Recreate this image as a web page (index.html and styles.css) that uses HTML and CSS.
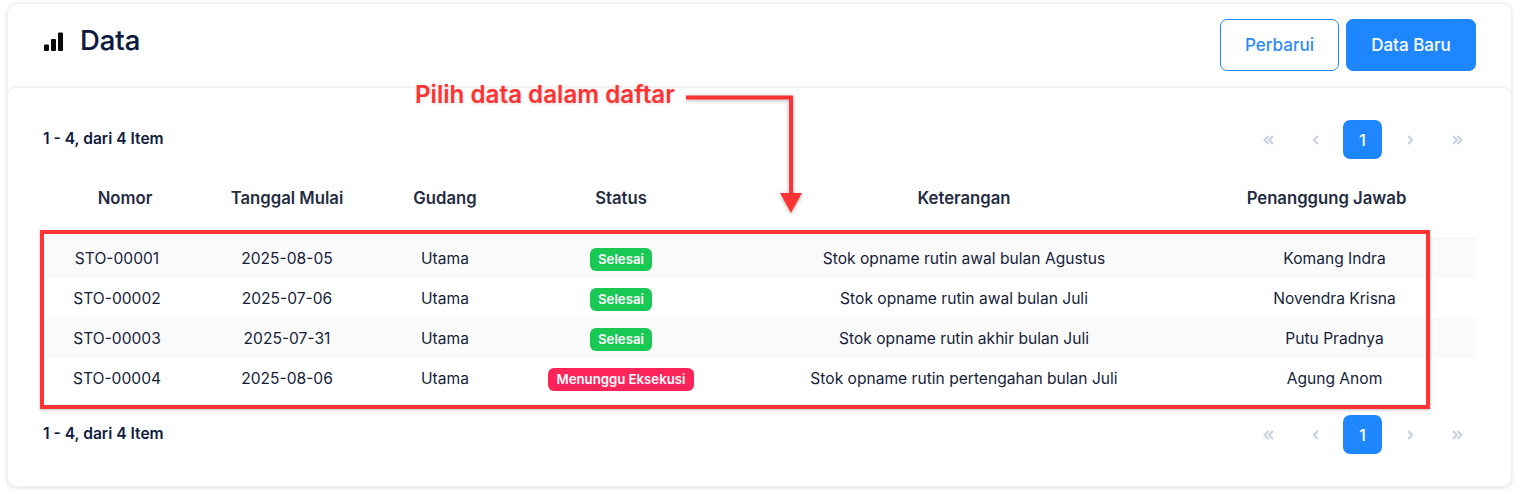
FILE: index.html
```html
<!DOCTYPE html>
<html lang="en">
<head>
    <meta charset="UTF-8">
    <title>Data</title>
    <link rel="stylesheet" href="styles.css">
</head>
<body>
<div class="page">
    <div class="card">
        <div class="card-head">
            <h1 class="title">
                <svg class="title-icon" width="20" height="20" viewBox="0 0 20 20"><rect x="1" y="12.500" width="5" height="6.500" rx="1"/><rect x="8" y="7" width="5" height="12" rx="1"/><rect x="15" y="0.500" width="5" height="18.500" rx="1"/></svg>
                Data
            </h1>
            <div class="actions">
                <button class="btn btn-outline">Perbarui</button>
                <button class="btn btn-primary">Data Baru</button>
            </div>
        </div>
        <div class="card-body">
            <div class="pager-row pager-top">
                <span class="count">1 - 4, dari 4 Item</span>
                <div class="pager">
                    <span class="page-link"><svg width="14" height="14" viewBox="0 0 14 14"><path d="M6.500 3 2.500 7l4 4M11 3 7 7l4 4"/></svg></span>
                    <span class="page-link"><svg width="14" height="14" viewBox="0 0 14 14"><path d="M8.800 3 4.800 7l4 4"/></svg></span>
                    <span class="page-link active">1</span>
                    <span class="page-link"><svg width="14" height="14" viewBox="0 0 14 14"><path d="M5.200 3l4 4-4 4"/></svg></span>
                    <span class="page-link"><svg width="14" height="14" viewBox="0 0 14 14"><path d="M3 3l4 4-4 4M7.500 3l4 4-4 4"/></svg></span>
                </div>
            </div>
            <table class="data-table">
                <colgroup>
                    <col class="c1"><col class="c2"><col class="c3"><col class="c4"><col class="c5"><col class="c6">
                </colgroup>
                <thead>
                    <tr>
                        <th class="th-first">Nomor</th>
                        <th>Tanggal Mulai</th>
                        <th>Gudang</th>
                        <th>Status</th>
                        <th>Keterangan</th>
                        <th class="th-last">Penanggung Jawab</th>
                    </tr>
                </thead>
                <tbody>
                    <tr>
                        <td>STO-00001</td><td>2025-08-05</td><td>Utama</td>
                        <td><span class="badge badge-done">Selesai</span></td>
                        <td>Stok opname rutin awal bulan Agustus</td><td>Komang Indra</td>
                    </tr>
                    <tr>
                        <td>STO-00002</td><td>2025-07-06</td><td>Utama</td>
                        <td><span class="badge badge-done">Selesai</span></td>
                        <td>Stok opname rutin awal bulan Juli</td><td>Novendra Krisna</td>
                    </tr>
                    <tr>
                        <td>STO-00003</td><td>2025-07-31</td><td>Utama</td>
                        <td><span class="badge badge-done">Selesai</span></td>
                        <td>Stok opname rutin akhir bulan Juli</td><td>Putu Pradnya</td>
                    </tr>
                    <tr>
                        <td>STO-00004</td><td>2025-08-06</td><td>Utama</td>
                        <td><span class="badge badge-wait">Menunggu Eksekusi</span></td>
                        <td>Stok opname rutin pertengahan bulan Juli</td><td>Agung Anom</td>
                    </tr>
                </tbody>
            </table>
            <div class="pager-row pager-bottom">
                <span class="count">1 - 4, dari 4 Item</span>
                <div class="pager">
                    <span class="page-link"><svg width="14" height="14" viewBox="0 0 14 14"><path d="M6.500 3 2.500 7l4 4M11 3 7 7l4 4"/></svg></span>
                    <span class="page-link"><svg width="14" height="14" viewBox="0 0 14 14"><path d="M8.800 3 4.800 7l4 4"/></svg></span>
                    <span class="page-link active">1</span>
                    <span class="page-link"><svg width="14" height="14" viewBox="0 0 14 14"><path d="M5.200 3l4 4-4 4"/></svg></span>
                    <span class="page-link"><svg width="14" height="14" viewBox="0 0 14 14"><path d="M3 3l4 4-4 4M7.500 3l4 4-4 4"/></svg></span>
                </div>
            </div>
        </div>
    </div>

    <!-- anotasi merah di atas tabel -->
    <div class="note-text">Pilih data dalam daftar</div>
    <svg class="note-arrow" width="130" height="130" viewBox="0 0 130 130">
        <path class="note-line" d="M1 3.500H106V103"/>
        <path class="note-head" d="M95 99H117L106 119Z"/>
    </svg>
    <div class="note-box"></div>
</div>
</body>
</html>
```

FILE: styles.css
```css
* {
    box-sizing: border-box;
}
html, body {
    margin: 0;
    background: #fff;
}
body {
    font-family: Inter, "Noto Sans", sans-serif;
    color: #0f1b3d;
}
.page {
    position: relative;
    width: 1521px;
    height: 490px;
    overflow: hidden;
    padding: 3px 9px 0 7px;
}
.card {
    height: 484px;
    border: 1px solid #f0f0f0;
    border-radius: 10px;
    box-shadow: 0 1px 4px rgba(0,0,0,.12);
    background: #fff;
}
.card-head {
    display: flex;
    justify-content: space-between;
    align-items: flex-start;
    height: 82px;
    padding: 15px 35px 0 35px;
}
.title {
    display: flex;
    align-items: center;
    margin: 0;
    padding-top: 3px;
    font-size: 27.400px;
    font-weight: 500;
    line-height: 36px;
    color: #0b1a3e;
    -webkit-text-stroke: .2px #0b1a3e;
}
.title-icon {
    margin-top: 4px;
    margin-right: 17px;
    fill: #0a0a0a;
}
.actions {
    display: flex;
    gap: 7px;
}
.btn {
    height: 52px;
    border-radius: 7px;
    border: 1px solid #1e87ff;
    font-family: inherit;
    font-size: 17px;
    font-weight: 500;
}
.btn-outline {
    width: 119px;
    background: #fff;
    color: #2f8bff;
}
.btn-primary {
    width: 130px;
    background: #1e87ff;
    color: #fff;
}
.card-body {
    height: 400px;
    margin: 0 -1px;
    border-top: 2px solid #f1f1f1;
    border-left: 1px solid #f0f0f0;
    border-right: 1px solid #f0f0f0;
    border-radius: 10px 10px 0 0;
    padding: 0 35px;
}
.pager-row {
    display: flex;
    justify-content: space-between;
    align-items: center;
    height: 39px;
}
.pager-top {
    margin-top: 32px;
}
.pager-bottom {
    margin-top: 17px;
}
.count {
    padding-bottom: 2px;
    font-size: 15.600px;
    font-weight: 600;
    color: #0f1b3d;
}
.pager {
    display: flex;
    gap: 8px;
}
.page-link {
    display: flex;
    align-items: center;
    justify-content: center;
    width: 39px;
    height: 39px;
    border-radius: 7px;
    font-size: 16.500px;
    font-weight: 500;
}
.page-link svg {
    fill: none;
    stroke: #c9cfdf;
    stroke-width: 2;
}
.page-link.active {
    background: #1e87ff;
    color: #fff;
}
.data-table {
    width: 1433px;
    border-collapse: collapse;
    table-layout: fixed;
}
.c1 { width: 148px; }
.c2 { width: 192px; }
.c3 { width: 124px; }
.c4 { width: 228px; }
.c5 { width: 458px; }
.c6 { width: 283px; }
.data-table th {
    height: 79px;
    padding: 0;
    border-bottom: 1px solid #f1f1f1;
    font-size: 16.700px;
    font-weight: 600;
    color: #242c42;
}
.data-table .th-first {
    padding-left: 16px;
}
.data-table .th-last {
    padding-right: 16px;
}
.data-table td {
    height: 40px;
    padding: 0;
    text-align: center;
    font-size: 15.600px;
    color: #161e3a;
}
.data-table tbody tr:nth-child(odd) {
    background: #fafafa;
}
.badge {
    display: inline-block;
    margin-top: 2px;
    padding: 0 8.500px;
    height: 23px;
    line-height: 23px;
    border-radius: 6px;
    font-size: 13.200px;
    font-weight: 600;
    color: #fff;
    vertical-align: middle;
}
.badge-done {
    background: #1ac954;
}
.badge-wait {
    background: #ff2459;
}
.note-text {
    position: absolute;
    left: 415px;
    top: 80px;
    font-size: 24.200px;
    line-height: 30px;
    font-weight: 600;
    color: #ff3333;
    text-shadow: 0 1px 3px rgba(0,0,0,.15);
}
.note-arrow {
    position: absolute;
    left: 685px;
    top: 94px;
    filter: drop-shadow(0 1px 2px rgba(0,0,0,.3));
}
.note-line {
    fill: none;
    stroke: #ff3333;
    stroke-width: 4;
}
.note-head {
    fill: #ff3333;
}
.note-box {
    position: absolute;
    left: 40px;
    top: 230px;
    width: 1390px;
    height: 179px;
    border: 4px solid #ff3333;
    box-shadow: 0 1px 3px rgba(0,0,0,.25);
}
```
